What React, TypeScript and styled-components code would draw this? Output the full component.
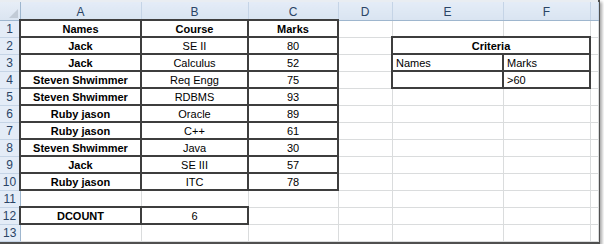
import React from 'react'
import styled, { createGlobalStyle } from 'styled-components'

const GlobalStyle = createGlobalStyle`
  html, body {
    margin: 0;
    padding: 0;
    background: #fff;
  }
`

const Frame = styled.div`
  width: 598px;
  padding-top: 2px;
  background: #e9edf2;
  border-right: 2px solid #505050;
  border-bottom: 2px solid #505050;
  box-shadow: 2px 2px 3px rgba(0, 0, 0, 0.35);
`

const Sheet = styled.table`
  border-collapse: collapse;
  table-layout: fixed;
  width: 598px;
  font-family: 'Liberation Sans', Arial, sans-serif;
  font-size: 11px;
  color: #000;
  background: #fff;
`

const Col = styled.col<{ $w: number }>`
  width: ${p => p.$w}px;
`

const HeadRow = styled.tr`
  height: 18px;
`

const Row = styled.tr`
  height: 17px;
`

const Corner = styled.th`
  padding: 0 2px 2px 0;
  background: linear-gradient(#e7eef7, #dbe5f1);
  border-right: 1px solid #9eb6ce;
  border-bottom: 1px solid #9eb6ce;
  text-align: right;
  vertical-align: bottom;
  line-height: 0;
`

const CornerMark = styled.span`
  display: inline-block;
  width: 0;
  height: 0;
  border-left: 9px solid transparent;
  border-bottom: 9px solid #c2cbd6;
`

const ColHead = styled.th`
  padding: 2px 0 0;
  font-weight: normal;
  font-size: 12px;
  line-height: 14px;
  color: #2a4466;
  text-align: center;
  background: linear-gradient(#e4ecf7, #d9e4f1);
  border-left: 1px solid #c5d4e6;
  border-right: 1px solid #c5d4e6;
  border-bottom: 1px solid #9eb6ce;
`

const RowHead = styled.th`
  padding: 1px 0 0;
  font-weight: normal;
  font-size: 12px;
  line-height: 14px;
  color: #2a4466;
  text-align: center;
  background: #e4ecf7;
  border-top: 1px solid #c5d4e6;
  border-bottom: 1px solid #c5d4e6;
  border-right: 1px solid #9eb6ce;
`

const Cell = styled.td<{ $boxed?: boolean; $bold?: boolean; $align?: 'left' | 'center' }>`
  padding: 1px 3px 0;
  line-height: 13px;
  white-space: nowrap;
  overflow: hidden;
  font-weight: ${p => (p.$bold ? 'bold' : 'normal')};
  text-align: ${p => p.$align || 'center'};
  border: ${p => (p.$boxed ? '2px solid #3e3e3e' : '1px solid #dadcdd')};
`

const columns = ['A', 'B', 'C', 'D', 'E', 'F', '']
const widths = [20, 121, 107, 90, 54, 111, 87, 8]

const records: [string, string, string][] = [
  ['Jack', 'SE II', '80'],
  ['Jack', 'Calculus', '52'],
  ['Steven Shwimmer', 'Req Engg', '75'],
  ['Steven Shwimmer', 'RDBMS', '93'],
  ['Ruby jason', 'Oracle', '89'],
  ['Ruby jason', 'C++', '61'],
  ['Steven Shwimmer', 'Java', '30'],
  ['Jack', 'SE III', '57'],
  ['Ruby jason', 'ITC', '78'],
]

const Blank = () => <Cell />

function criteriaCells(row: number) {
  if (row === 2) {
    return (
      <Cell $boxed $bold colSpan={2}>
        Criteria
      </Cell>
    )
  }
  if (row === 3) {
    return (
      <>
        <Cell $boxed $align="left">Names</Cell>
        <Cell $boxed $align="left">Marks</Cell>
      </>
    )
  }
  if (row === 4) {
    return (
      <>
        <Cell $boxed />
        <Cell $boxed $align="left">&gt;60</Cell>
      </>
    )
  }
  return (
    <>
      <Blank />
      <Blank />
    </>
  )
}

export default function App() {
  const rows: React.ReactNode[] = []

  rows.push(
    <Row key={1}>
      <RowHead>1</RowHead>
      <Cell $boxed $bold>Names</Cell>
      <Cell $boxed $bold>Course</Cell>
      <Cell $boxed $bold>Marks</Cell>
      <Blank />
      {criteriaCells(1)}
      <Blank />
    </Row>
  )

  records.forEach(([name, course, marks], i) => {
    const n = i + 2
    rows.push(
      <Row key={n}>
        <RowHead>{n}</RowHead>
        <Cell $boxed $bold>{name}</Cell>
        <Cell $boxed>{course}</Cell>
        <Cell $boxed>{marks}</Cell>
        <Blank />
        {criteriaCells(n)}
        <Blank />
      </Row>
    )
  })

  rows.push(
    <Row key={11}>
      <RowHead>11</RowHead>
      {widths.slice(1).map((_, j) => <Blank key={j} />)}
    </Row>
  )

  rows.push(
    <Row key={12}>
      <RowHead>12</RowHead>
      <Cell $boxed $bold>DCOUNT</Cell>
      <Cell $boxed>6</Cell>
      {widths.slice(3).map((_, j) => <Blank key={j} />)}
    </Row>
  )

  rows.push(
    <Row key={13}>
      <RowHead>13</RowHead>
      {widths.slice(1).map((_, j) => <Blank key={j} />)}
    </Row>
  )

  return (
    <>
      <GlobalStyle />
      <Frame>
        <Sheet>
          <colgroup>
            {widths.map((w, i) => (
              <Col key={i} $w={w} />
            ))}
          </colgroup>
          <thead>
            <HeadRow>
              <Corner>
                <CornerMark />
              </Corner>
              {columns.map((c, i) => (
                <ColHead key={i}>{c}</ColHead>
              ))}
            </HeadRow>
          </thead>
          <tbody>{rows}</tbody>
        </Sheet>
      </Frame>
    </>
  )
}
